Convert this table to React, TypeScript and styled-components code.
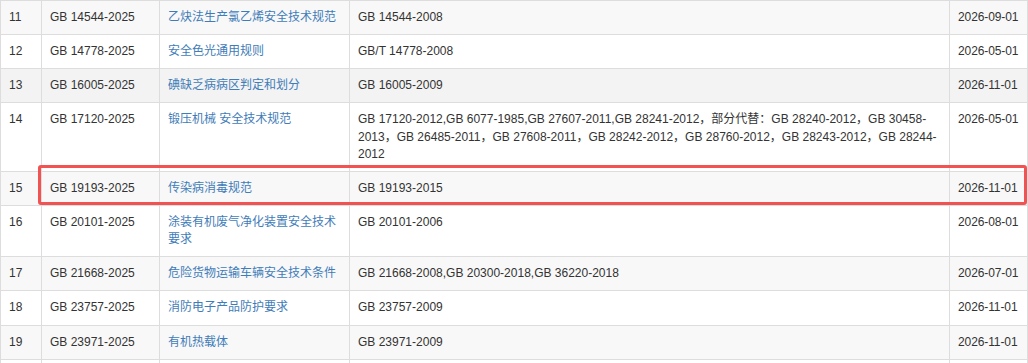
import { type FC } from 'react';
import styled, { createGlobalStyle } from 'styled-components';

type StdRow = {
  no: number;
  code: string;
  title: string;
  replaces: string;
  date: string;
  hover?: boolean;
};

const rows: StdRow[] = [
  { no: 11, code: 'GB 14544-2025', title: '乙炔法生产氯乙烯安全技术规范', replaces: 'GB 14544-2008', date: '2026-09-01' },
  { no: 12, code: 'GB 14778-2025', title: '安全色光通用规则', replaces: 'GB/T 14778-2008', date: '2026-05-01' },
  { no: 13, code: 'GB 16005-2025', title: '碘缺乏病病区判定和划分', replaces: 'GB 16005-2009', date: '2026-11-01', hover: true },
  {
    no: 14,
    code: 'GB 17120-2025',
    title: '锻压机械 安全技术规范',
    replaces:
      'GB 17120-2012,GB 6077-1985,GB 27607-2011,GB 28241-2012，部分代替：GB 28240-2012，GB 30458-2013，GB 26485-2011，GB 27608-2011，GB 28242-2012，GB 28760-2012，GB 28243-2012，GB 28244-2012',
    date: '2026-05-01',
  },
  { no: 15, code: 'GB 19193-2025', title: '传染病消毒规范', replaces: 'GB 19193-2015', date: '2026-11-01' },
  { no: 16, code: 'GB 20101-2025', title: '涂装有机废气净化装置安全技术要求', replaces: 'GB 20101-2006', date: '2026-08-01' },
  { no: 17, code: 'GB 21668-2025', title: '危险货物运输车辆安全技术条件', replaces: 'GB 21668-2008,GB 20300-2018,GB 36220-2018', date: '2026-07-01' },
  { no: 18, code: 'GB 23757-2025', title: '消防电子产品防护要求', replaces: 'GB 23757-2009', date: '2026-11-01' },
  { no: 19, code: 'GB 23971-2025', title: '有机热载体', replaces: 'GB 23971-2009', date: '2026-11-01' },
];

const GlobalStyle = createGlobalStyle`
  body {
    margin: 0;
    background: #fff;
    font-family: "Liberation Sans", "Noto Sans CJK SC", sans-serif;
    font-size: 12px;
    color: #333;
  }
`;

const Wrap = styled.div`
  position: relative;
  width: 1028px;
  height: 363px;
  overflow: hidden;
`;

const Table = styled.table`
  width: 1027px;
  table-layout: fixed;
  border-collapse: collapse;
  border-spacing: 0;
  line-height: 1.42857;
`;

const Tr = styled.tr<{ $striped: boolean; $hover?: boolean }>`
  background: ${(p) => (p.$hover ? '#f3f3f3' : p.$striped ? '#f8f8f8' : '#fff')};
`;

const Td = styled.td<{ $nowrap?: boolean }>`
  padding: 8px;
  border: 1px solid #ddd;
  vertical-align: top;
  word-wrap: break-word;
  white-space: ${(p) => (p.$nowrap ? 'nowrap' : 'normal')};
  ${(p) => (p.$nowrap ? 'padding-right: 0; letter-spacing: -0.1px;' : '')}
`;

const TitleLink = styled.a`
  color: #3f7cb8;
  text-decoration: none;
`;

// highlight box drawn over row 15
const Marker = styled.div`
  position: absolute;
  left: 38px;
  top: 165px;
  width: 983px;
  height: 34px;
  border: 3px solid #f25252;
  border-radius: 3px;
  pointer-events: none;
`;

export const App: FC = () => {
  return (
    <>
      <GlobalStyle />
      <Wrap>
        <Table>
          <colgroup>
            <col style={{ width: 41 }} />
            <col style={{ width: 118 }} />
            <col style={{ width: 190 }} />
            <col style={{ width: 600 }} />
            <col style={{ width: 78 }} />
          </colgroup>
          <tbody>
            {rows.map((r) => (
              <Tr key={r.no} $striped={r.no % 2 === 1} $hover={r.hover}>
                <Td>{r.no}</Td>
                <Td>{r.code}</Td>
                <Td>
                  <TitleLink href="#">{r.title}</TitleLink>
                </Td>
                <Td>{r.replaces}</Td>
                <Td $nowrap>{r.date}</Td>
              </Tr>
            ))}
            <Tr $striped={false}>
              <Td>&nbsp;</Td>
              <Td />
              <Td />
              <Td />
              <Td />
            </Tr>
          </tbody>
        </Table>
        <Marker />
      </Wrap>
    </>
  );
};

export default App;
